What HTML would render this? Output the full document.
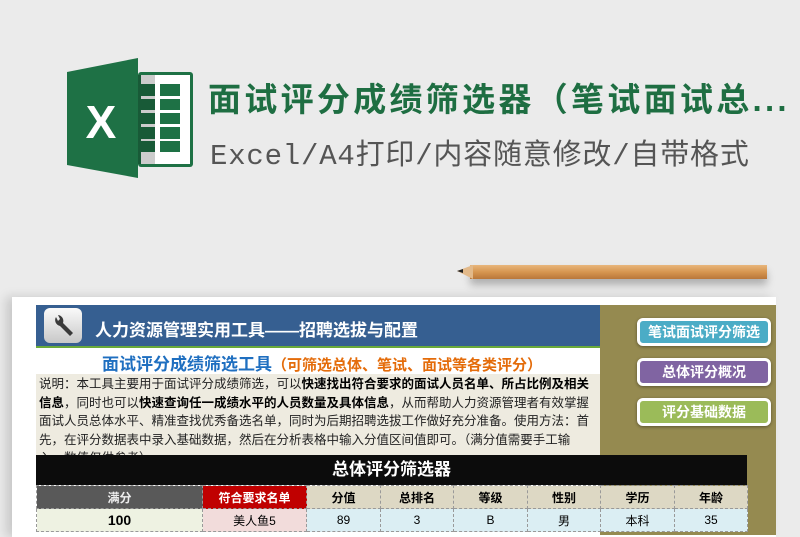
<!DOCTYPE html>
<html><head><meta charset="utf-8"><style>
*{margin:0;padding:0;box-sizing:border-box}
body{width:800px;height:526px;overflow:hidden;background:#ebebeb;font-family:"Liberation Sans","Noto Sans CJK SC",sans-serif;position:relative}
.abs{position:absolute}
.t1{left:208px;top:73px;font-size:33px;font-weight:bold;color:#1e6e42;white-space:nowrap;letter-spacing:3.3px}
.t2{left:210px;top:131px;font-size:29px;color:#555;white-space:nowrap;letter-spacing:0.8px;font-family:"Liberation Mono","Noto Sans CJK SC",monospace}
.sheet{left:12px;top:297px;width:764px;height:240px;background:#fff;box-shadow:-6px 0 10px rgba(0,0,0,.15)}
.btn{position:absolute;left:637px;width:134px;height:28px;border:3px solid #fff;border-radius:6px;color:#fff;font-weight:bold;font-size:14px;text-align:center;line-height:22px;box-shadow:0 1px 3px rgba(0,0,0,.4)}
.desc{left:36px;top:374px;width:564px;height:81px;background:#eeebe0;font-size:12.5px;line-height:18.5px;color:#222;padding:1px 3px;overflow:hidden;white-space:nowrap}
.desc b{color:#000}
table{position:absolute;left:36px;top:485px;border-collapse:collapse;font-size:12px;text-align:center}
td{height:23px;border:1px dashed #999;font-weight:bold}
</style></head><body>
<svg class="abs" style="left:60px;top:55px" width="140" height="130">
<rect x="78" y="17" width="55" height="95" rx="3" fill="#1e7145"/>
<rect x="81" y="20" width="49" height="89" fill="#fff"/>
<g fill="#1e7145">
<rect x="80" y="29" width="15" height="12"/><rect x="100" y="29" width="20" height="12"/>
<rect x="80" y="44" width="15" height="11"/><rect x="100" y="44" width="20" height="11"/>
<rect x="80" y="58" width="15" height="11"/><rect x="100" y="58" width="20" height="11"/>
<rect x="80" y="72" width="15" height="12"/><rect x="100" y="72" width="20" height="12"/>
<rect x="80" y="86" width="15" height="11"/><rect x="100" y="86" width="20" height="11"/>
</g>
<rect x="78" y="20" width="17" height="89" fill="rgba(0,0,0,.2)"/>
<polygon points="7,17 78,3 78,123 7,110" fill="#1e7145"/>
<text x="41" y="83" font-size="46" font-weight="bold" fill="#fff" text-anchor="middle" font-family="Liberation Sans">X</text>
</svg>
<div class="abs t1">面试评分成绩筛选器（笔试面试总...</div>
<div class="abs t2">Excel/A4打印/内容随意修改/自带格式</div>
<div class="abs" style="left:470px;top:265px;width:297px;height:14px;background:linear-gradient(#e8b67c,#d69650 50%,#b9773a);box-shadow:0 6px 8px rgba(0,0,0,.25)"></div>
<svg class="abs" style="left:455px;top:263px" width="20" height="18"><polygon points="2,8 18,2 18,16" fill="#e2b98a"/><polygon points="2,8 8,6 8,10" fill="#222"/></svg>
<div class="abs sheet"></div>
<div class="abs" style="left:600px;top:305px;width:176px;height:230px;background:#958a50"></div>
<div class="abs" style="left:36px;top:305px;width:564px;height:43px;background:#365f91;border-bottom:2px solid #6aaa3a"></div>
<div class="abs" style="left:44px;top:308px;width:38px;height:35px;border-radius:6px;background:linear-gradient(#fafafa,#c8c8c8)"></div>
<svg class="abs" style="left:44px;top:308px" width="38" height="35"><path d="M12 9 a6 6 0 0 0 4 9 L26 28 L29 25 L19 15 a6 6 0 0 0 -5 -8 L16 11 L14 13 Z" fill="#3a3a3a"/></svg>
<div class="abs" style="left:95px;top:316px;font-size:17px;font-weight:bold;color:#fff">人力资源管理实用工具——招聘选拔与配置</div>
<div class="abs" style="left:102px;top:350px;font-size:17px;font-weight:bold;color:#1f6fc0;white-space:nowrap">面试评分成绩筛选工具<span style="color:#e46c0a;font-size:15px">（可筛选总体、笔试、面试等各类评分）</span></div>
<div class="abs desc">说明：本工具主要用于面试评分成绩筛选，可以<b>快速找出符合要求的面试人员名单、所占比例及相关</b><br><b>信息</b>，同时也可以<b>快速查询任一成绩水平的人员数量及具体信息</b>，从而帮助人力资源管理者有效掌握<br>面试人员总体水平、精准查找优秀备选名单，同时为后期招聘选拔工作做好充分准备。使用方法：首<br>先，在评分数据表中录入基础数据，然后在分析表格中输入分值区间值即可。（满分值需要手工输<br>入，数值仅供参考）</div>
<div class="abs" style="left:36px;top:455px;width:711px;height:30px;background:#0c0c0c;color:#fff;font-size:17px;font-weight:bold;text-align:center;line-height:30px">总体评分筛选器</div>
<table>
<tr><td style="width:166px;background:#595959;color:#eee">满分</td><td style="width:104px;background:#c00000;color:#fff">符合要求名单</td><td style="width:74px;background:#ddd8c4">分值</td><td style="width:73px;background:#ddd8c4">总排名</td><td style="width:74px;background:#ddd8c4">等级</td><td style="width:73px;background:#ddd8c4">性别</td><td style="width:74px;background:#ddd8c4">学历</td><td style="width:73px;background:#ddd8c4">年龄</td></tr>
<tr><td style="background:#eef2e2;font-size:14px">100</td><td style="background:#f2dcdb;font-weight:normal">美人鱼5</td><td style="background:#dbeef3;font-weight:normal">89</td><td style="background:#dbeef3;font-weight:normal">3</td><td style="background:#dbeef3;font-weight:normal">B</td><td style="background:#dbeef3;font-weight:normal">男</td><td style="background:#dbeef3;font-weight:normal">本科</td><td style="background:#dbeef3;font-weight:normal">35</td></tr>
</table>
<div class="btn" style="top:318px;background:#4bacc6">笔试面试评分筛选</div>
<div class="btn" style="top:358px;background:#8064a2">总体评分概况</div>
<div class="btn" style="top:398px;background:#9bbb59">评分基础数据</div>
</body></html>
